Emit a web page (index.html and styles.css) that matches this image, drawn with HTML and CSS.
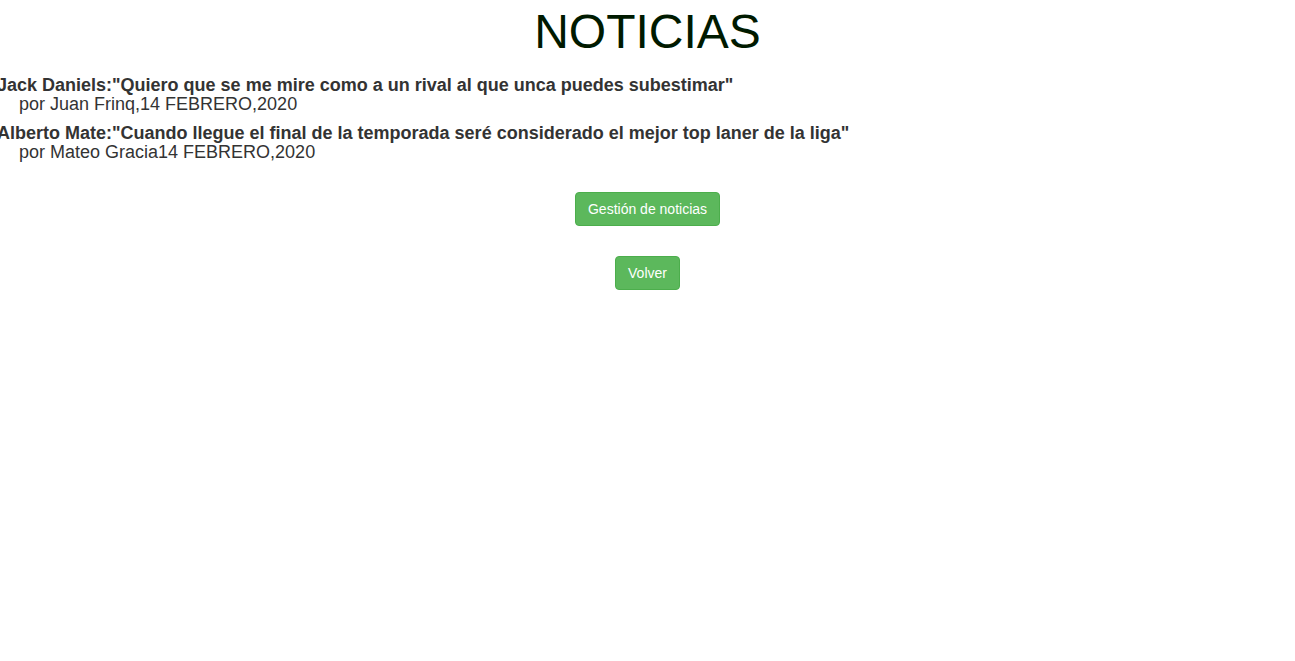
FILE: index.html
```html
<!DOCTYPE html>
<html lang="es">
<head>
<meta charset="utf-8">
<title>Noticias</title>
<link rel="stylesheet" href="styles.css">
</head>
<body>
<h1 class="title">NOTICIAS</h1>
<div class="news">
  <div class="item">
    <div class="headline">Jack Daniels:"Quiero que se me mire como a un rival al que unca puedes subestimar"</div>
    <div class="byline">por Juan Frinq,14 FEBRERO,2020</div>
  </div>
  <div class="item">
    <div class="headline">Alberto Mate:"Cuando llegue el final de la temporada seré considerado el mejor top laner de la liga"</div>
    <div class="byline">por Mateo Gracia14 FEBRERO,2020</div>
  </div>
</div>
<div class="actions">
  <button class="btn">Gestión de noticias</button>
  <button class="btn">Volver</button>
</div>
</body>
</html>
```
FILE: styles.css
```css
html, body {
  margin: 0;
  padding: 0;
  background: #fff;
}
body {
  font-family: "Liberation Sans", Arial, sans-serif;
  font-size: 14px;
  line-height: 1.42857;
  color: #333;
}
.title {
  margin: 2px 0 0;
  text-align: center;
  font-size: 48px;
  font-weight: normal;
  line-height: 60px;
  color: #001a00;
}
.news {
  margin-top: 14px;
  display: flex;
  flex-direction: column;
  gap: 10px;
}
.headline {
  margin-left: -3px;
  font-size: 18px;
  font-weight: bold;
  line-height: 19px;
}
.byline {
  padding-left: 19px;
  font-size: 18px;
  line-height: 19px;
}
.actions {
  margin-top: 30px;
  display: flex;
  flex-direction: column;
  align-items: center;
  gap: 30px;
}
.btn {
  font-family: "Liberation Sans", Arial, sans-serif;
  font-size: 14px;
  line-height: 20px;
  padding: 6px 12px;
  color: #fff;
  background: #5cb85c;
  border: 1px solid #4cae4c;
  border-radius: 4px;
  cursor: pointer;
}
```
